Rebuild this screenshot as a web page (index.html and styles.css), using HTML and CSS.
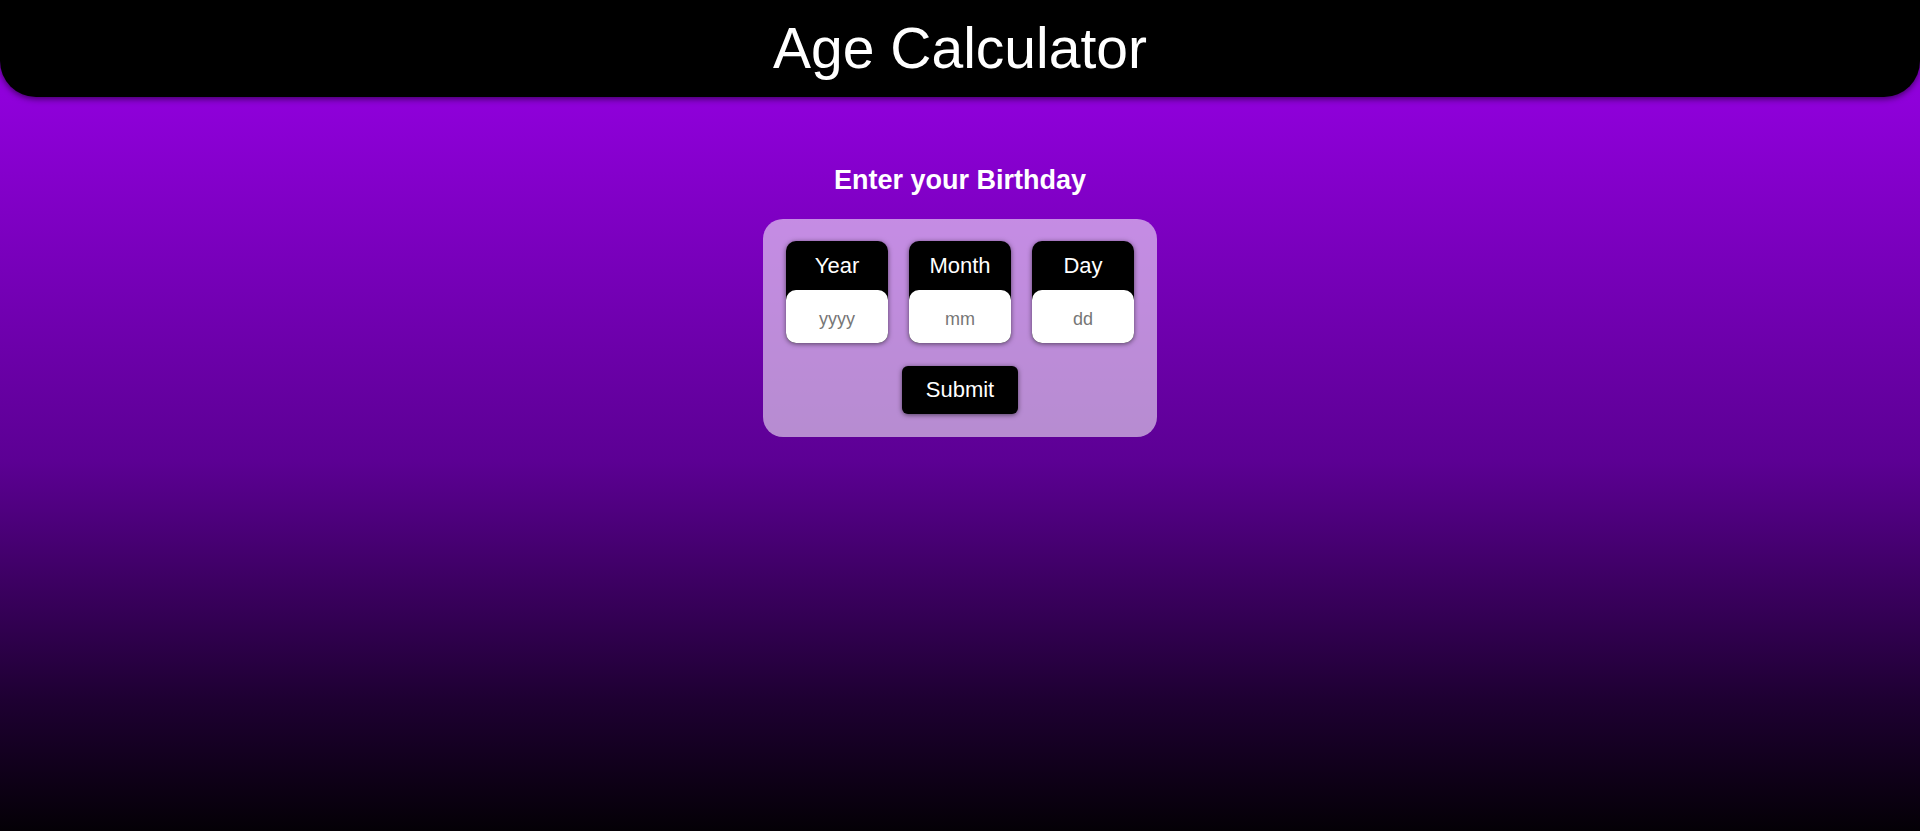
FILE: index.html
```html
<!DOCTYPE html>
<html lang="en">
<head>
<meta charset="utf-8">
<title>Age Calculator</title>
<link rel="stylesheet" href="styles.css">
</head>
<body>
<header class="topbar">
  <h1 class="title">Age Calculator</h1>
</header>
<main class="main">
  <h2 class="subtitle">Enter your Birthday</h2>
  <form class="card">
    <div class="fields">
      <div class="field">
        <label class="field-label" for="year">Year</label>
        <input class="field-input" id="year" type="text" placeholder="yyyy">
      </div>
      <div class="field">
        <label class="field-label" for="month">Month</label>
        <input class="field-input" id="month" type="text" placeholder="mm">
      </div>
      <div class="field">
        <label class="field-label" for="day">Day</label>
        <input class="field-input" id="day" type="text" placeholder="dd">
      </div>
    </div>
    <button class="submit" type="button">Submit</button>
  </form>
</main>
</body>
</html>
```

FILE: styles.css
```css
html, body {
  margin: 0;
  padding: 0;
}

body {
  min-height: 100vh;
  font-family: "Liberation Sans", Arial, sans-serif;
  color: #fff;
  background: linear-gradient(to bottom,
    #9a00e8 0px,
    #8f00da 100px,
    #5c0094 460px,
    #1e0032 700px,
    #040006 831px);
  background-attachment: fixed;
}

.topbar {
  height: 97px;
  background: #000;
  border-radius: 0 0 36px 36px;
  box-shadow: 0 2px 6px rgba(0, 0, 0, 0.55);
}

.title {
  margin: 0;
  font-size: 57px;
  font-weight: normal;
  line-height: 97px;
  text-align: center;
}

.main {
  display: flex;
  flex-direction: column;
  align-items: center;
}

.subtitle {
  margin: 68px 0 23px;
  font-size: 27px;
  font-weight: bold;
  line-height: 31px;
}

.card {
  display: flex;
  flex-direction: column;
  align-items: center;
  gap: 23px;
  width: 394px;
  box-sizing: border-box;
  padding: 22px 23px 23px;
  border-radius: 20px;
  background: rgba(255, 255, 255, 0.55);
}

.fields {
  display: flex;
  gap: 21px;
}

.field {
  display: flex;
  flex-direction: column;
  width: 102px;
  height: 102px;
  background: #000;
  border-radius: 10px;
  box-shadow: 0 1px 5px rgba(0, 0, 0, 0.55);
}

.field-label {
  height: 49px;
  line-height: 49px;
  text-align: center;
  font-size: 22px;
  color: #fff;
}

.field-input {
  height: 53px;
  width: 100%;
  box-sizing: border-box;
  border: none;
  outline: none;
  margin: 0;
  padding: 6px 0 0;
  border-radius: 10px;
  background: #fff;
  text-align: center;
  font-family: "Liberation Sans", Arial, sans-serif;
  font-size: 18px;
  color: #000;
}

.field-input::placeholder {
  color: #767676;
}

.submit {
  width: 116px;
  height: 48px;
  border: none;
  border-radius: 6px;
  background: #000;
  color: #fff;
  font-family: "Liberation Sans", Arial, sans-serif;
  font-size: 22px;
  box-shadow: 0 1px 5px rgba(0, 0, 0, 0.55);
  cursor: pointer;
}
```
